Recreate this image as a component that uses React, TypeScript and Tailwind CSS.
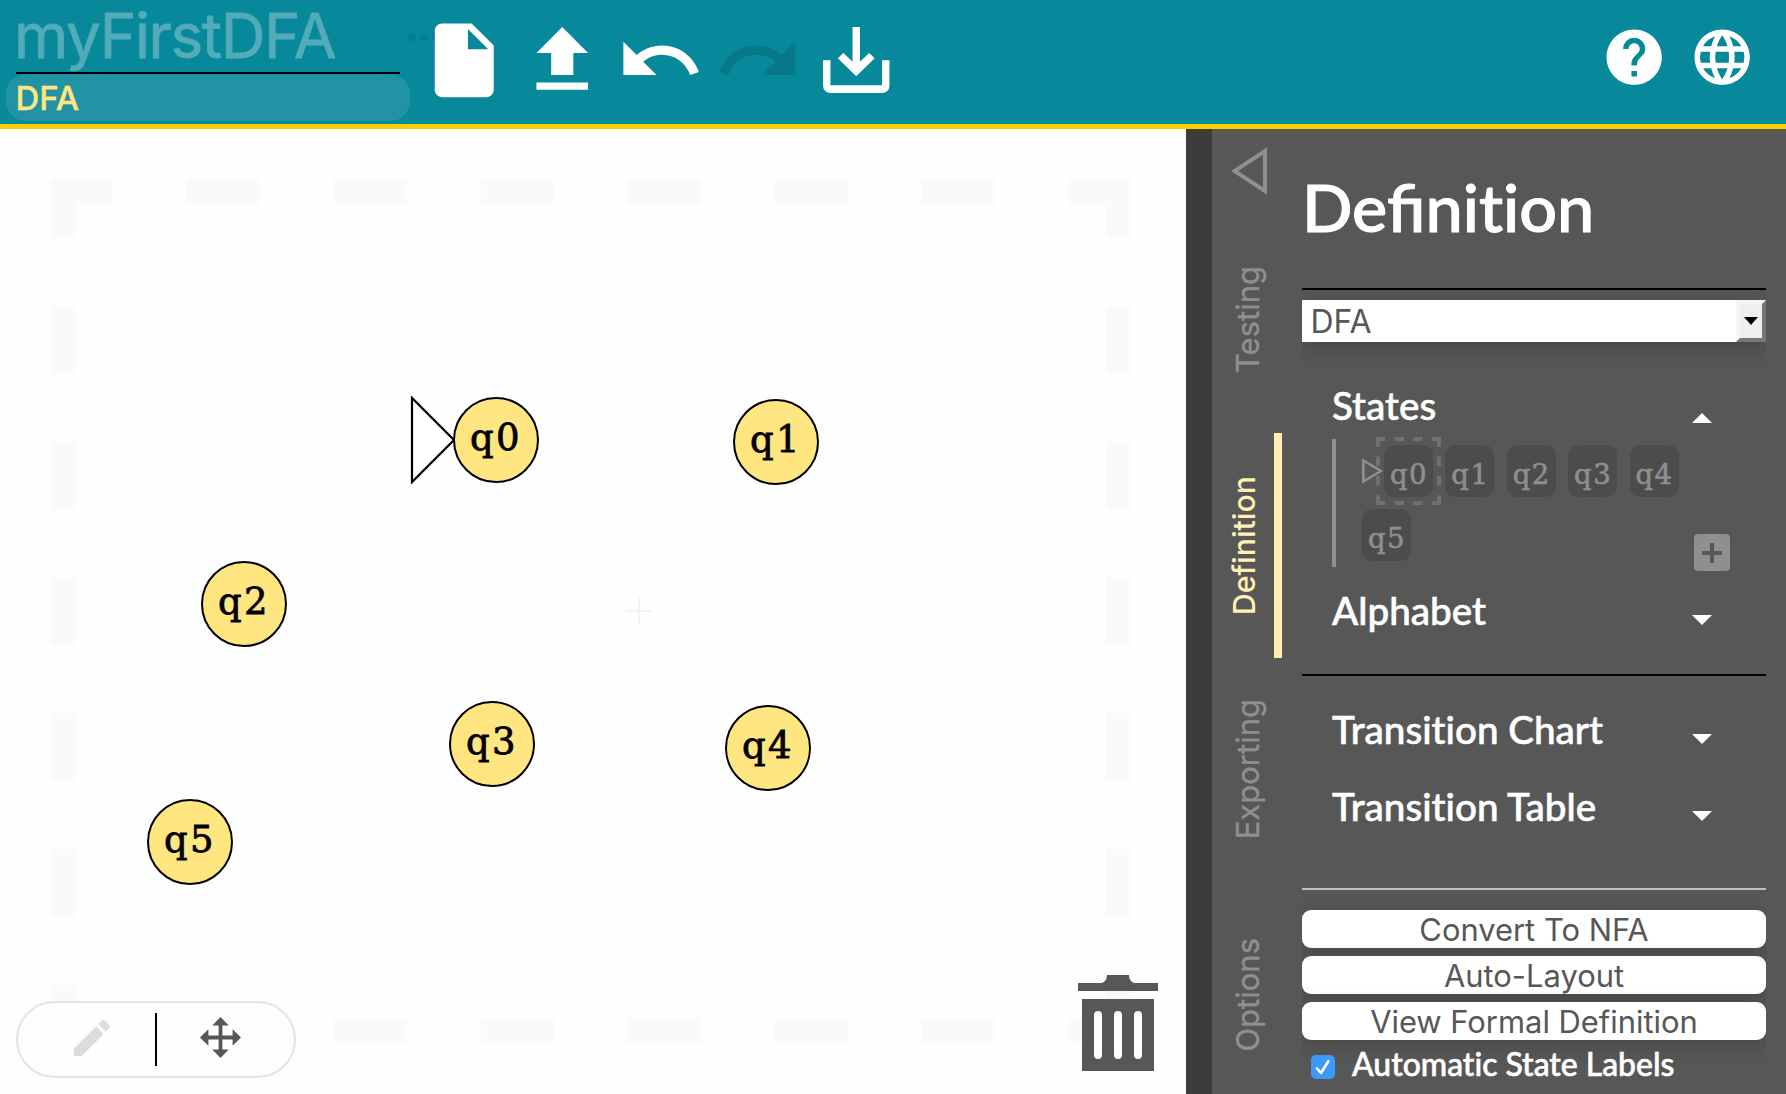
import React from 'react';

type IconProps = { d: string; className?: string };

function Icon({ d, className = '' }: IconProps) {
  return (
    <svg viewBox="0 0 24 24" fill="currentColor" className={`shrink-0 ${className}`}>
      <path d={d} />
    </svg>
  );
}

const ICONS = {
  file: 'M6 2c-1.1 0-1.99.9-1.99 2L4 20c0 1.1.89 2 1.99 2H18c1.1 0 2-.9 2-2V8l-6-6H6zm7 7V3.5L18.5 9H13z',
  upload: 'M9 16h6v-6h4l-7-7-7 7h4zm-4 2h14v2H5z',
  undo: 'M12.5 8c-2.65 0-5.05.99-6.9 2.6L2 7v9h9l-3.62-3.62c1.39-1.16 3.16-1.88 5.12-1.88 3.54 0 6.55 2.31 7.6 5.5l2.37-.78C21.08 11.03 17.15 8 12.5 8z',
  redo: 'M18.4 10.6C16.55 8.99 14.15 8 11.5 8c-4.65 0-8.58 3.03-9.96 7.22L3.9 16c1.05-3.19 4.05-5.5 7.6-5.5 1.95 0 3.73.72 5.12 1.88L13 16h9V7l-3.6 3.6z',
  save: 'M11 3v9.4L8.5 10 7 11.45l5 4.9 5-4.9L15.5 10 13 12.4V3zM3 12v6.9a2 2 0 0 0 2 2h14a2 2 0 0 0 2-2V12h-2v6.8H5V12z',
  help: 'M12 2C6.48 2 2 6.48 2 12s4.48 10 10 10 10-4.48 10-10S17.52 2 12 2zm1 17h-2v-2h2v2zm2.07-7.75l-.9.92C13.45 12.9 13 13.5 13 15h-2v-.5c0-1.1.45-2.1 1.17-2.83l1.24-1.26c.37-.36.59-.86.59-1.41 0-1.1-.9-2-2-2s-2 .9-2 2H8c0-2.21 1.79-4 4-4s4 1.79 4 4c0 .88-.36 1.68-.93 2.25z',
  globe:
    'M11.99 2C6.47 2 2 6.48 2 12s4.47 10 9.99 10C17.52 22 22 17.52 22 12S17.52 2 11.99 2zm6.93 6h-2.95c-.32-1.25-.78-2.45-1.38-3.56 1.84.63 3.37 1.91 4.33 3.56zM12 4.04c.83 1.2 1.48 2.53 1.91 3.96h-3.82c.43-1.43 1.08-2.76 1.91-3.96zM4.26 14C4.1 13.36 4 12.69 4 12s.1-1.36.26-2h3.38c-.08.66-.14 1.32-.14 2 0 .68.06 1.34.14 2H4.26zm.82 2h2.95c.32 1.25.78 2.45 1.38 3.56-1.84-.63-3.37-1.9-4.33-3.56zm2.95-8H5.08c.96-1.66 2.49-2.93 4.33-3.56C8.81 5.55 8.35 6.75 8.03 8zM12 19.96c-.83-1.2-1.48-2.53-1.91-3.96h3.82c-.43 1.43-1.08 2.76-1.91 3.96zM14.34 14H9.66c-.09-.66-.16-1.32-.16-2 0-.68.07-1.35.16-2h4.68c.09.65.16 1.32.16 2 0 .68-.07 1.34-.16 2zm.25 5.56c.6-1.11 1.06-2.31 1.38-3.56h2.95c-.96 1.65-2.49 2.93-4.33 3.56zM16.36 14c.08-.66.14-1.32.14-2 0-.68-.06-1.34-.14-2h3.38c.16.64.26 1.31.26 2s-.1 1.36-.26 2h-3.38z',
  pencil:
    'M3 17.25V21h3.75L17.81 9.94l-3.75-3.75L3 17.25zM20.71 7.04c.39-.39.39-1.02 0-1.41l-2.34-2.34c-.39-.39-1.02-.39-1.41 0l-1.83 1.83 3.75 3.75 1.83-1.83z',
};

function Header() {
  return (
    <header className="flex h-[129px] shrink-0 border-b-[5px] border-[#ffce00] bg-[#08899b] text-white">
      <div className="w-[410px] shrink-0">
        <div className="mr-2.5 ml-4 h-[74px] border-b-2 border-black">
          <div className="-ml-0.5 text-[62px] leading-[71px] tracking-[-1.4px] text-[#52abb9] [-webkit-text-stroke:0.8px_#52abb9]">
            myFirstDFA
          </div>
        </div>
        <div className="ml-1.5 h-[47px] rounded-[20px] bg-[#2293a5] pl-[9.5px] text-[33px] leading-[48px] font-medium text-[#ffe680] [-webkit-text-stroke:0.3px_#ffe680]">
          DFA
        </div>
      </div>
      <div className="relative flex gap-[9.5px] pt-4 pl-[9.5px]">
        <div className="absolute top-[33px] left-[-2px] flex gap-1">
          <span className="size-2 rounded-full bg-[#067b8b]" />
          <span className="size-2 rounded-full bg-[#067b8b]" />
          <span className="size-2 rounded-full bg-[#067b8b]" />
        </div>
        <Icon d={ICONS.file} className="relative size-[88.5px]" />
        <Icon d={ICONS.upload} className="size-[88.5px]" />
        <Icon d={ICONS.undo} className="size-[88.5px]" />
        <Icon d={ICONS.redo} className="size-[88.5px] text-[#067887]" />
        <Icon d={ICONS.save} className="size-[88.5px]" />
      </div>
      <div className="ml-auto flex gap-[21.6px] pt-[24.3px] pr-[30.7px]">
        <Icon d={ICONS.help} className="size-[66.4px]" />
        <Icon d={ICONS.globe} className="size-[66.4px]" />
      </div>
    </header>
  );
}

const NODES = [
  { name: 'q0', x: 496, y: 311 },
  { name: 'q1', x: 776, y: 313 },
  { name: 'q2', x: 244, y: 475 },
  { name: 'q3', x: 492, y: 615 },
  { name: 'q4', x: 768, y: 619 },
  { name: 'q5', x: 190, y: 713 },
];

function Canvas() {
  return (
    <main className="relative w-[1186px] shrink-0 bg-[#fefefe]">
      <svg width="1186" height="965" viewBox="0 0 1186 965" className="absolute inset-0" fill="none">
        <g stroke="#fafafa" strokeWidth="25">
          <path d="M51 62.5H1131M51 901.5H1131" strokeDasharray="73.3 73.75" strokeDashoffset="11.7" />
          <path d="M63.5 75V889M1118.5 75V889" strokeDasharray="67.7 68" strokeDashoffset="33.7" />
        </g>
        <path d="M626 482h26M639 469v26" stroke="#f3f3f3" strokeWidth="2" />
        <path d="M412 269V353L454 311z" fill="#fff" stroke="#000" strokeWidth="2.2" />
      </svg>
      {NODES.map((n) => (
        <div
          key={n.name}
          style={{ left: n.x - 43, top: n.y - 43 }}
          className="absolute size-[86px] rounded-full border-[2.4px] border-black bg-[#ffe680] text-center font-['DejaVu_Serif',serif] text-[37px] leading-[77px] tracking-[2.5px] text-black [-webkit-text-stroke:0.8px_#000]"
        >
          {n.name}
        </div>
      ))}
      <div className="absolute bottom-[16px] left-[16px] flex h-[77px] w-[280px] items-center rounded-full border-2 border-[#e4e4e4] bg-[#fefefe]">
        <Icon d={ICONS.pencil} className="-mt-1 ml-[50px] size-12 text-[#dcdcdc]" />
        <span className="ml-[39px] h-[53px] w-0.5 bg-black" />
        <svg viewBox="0 0 41 41" className="-mt-[5px] ml-[43px] size-[41px]" fill="#575757">
          <path d="M20.5 0l8.2 8.4h-6.3v10.2h10.2v-6.3L41 20.5l-8.4 8.2v-6.3H22.4v10.2h6.3L20.5 41l-8.2-8.4h6.3V22.4H8.4v6.3L0 20.5l8.4-8.2v6.3h10.2V8.4h-6.3z" />
        </svg>
      </div>
      <svg viewBox="0 0 80 96" className="absolute top-[846px] left-[1078px] h-[96px] w-[80px]" fill="#575757">
        <path d="M0 8h24q5-2 5-8h22q0 6 5 8h24v8H0zM4 24h72v72H4z" />
        <path d="M20 40v40M40 40v40M60 40v40" stroke="#fefefe" strokeWidth="8" strokeLinecap="round" />
      </svg>
    </main>
  );
}

const TABS = [
  { name: 'Testing', active: false },
  { name: 'Definition', active: true },
  { name: 'Exporting', active: false },
  { name: 'Options', active: false },
];

function TabStrip() {
  return (
    <nav className="flex w-[90px] shrink-0 flex-col overflow-hidden text-[31px] leading-10 text-[#8f8f8f]">
      <div className="h-[78px] shrink-0 pt-[17px] pl-[19px]">
        <svg width="37" height="50" viewBox="0 0 37 50" fill="none" stroke="#8f8f8f" strokeWidth="4">
          <path d="M34 5v40L3.5 25z" />
        </svg>
      </div>
      {TABS.map((t) =>
        t.active ? (
          <div
            key={t.name}
            className="mt-px mr-5 -mb-px flex h-[225px] shrink-0 items-center border-r-8 border-[#fff0b3] pl-3 text-[30.3px] font-medium text-[#fff0b3]"
          >
            <span className="rotate-180 [writing-mode:vertical-rl]">{t.name}</span>
          </div>
        ) : (
          <div key={t.name} className="flex h-[225px] shrink-0 items-center pl-4 [-webkit-text-stroke:0.4px_#8f8f8f]">
            <span className="rotate-180 [writing-mode:vertical-rl]">{t.name}</span>
          </div>
        ),
      )}
    </nav>
  );
}

function Section({ title, open = false }: { title: string; open?: boolean }) {
  return (
    <div className="flex h-[44px] justify-between pr-[54px] pl-[30px] text-[38.6px] leading-[44px] font-medium [font-variant-ligatures:none] [-webkit-text-stroke:0.6px_#fff]">
      <span>{title}</span>
      {open ? (
        <svg width="20" height="10" viewBox="0 0 20 10" className="mt-[30px]" fill="#fff">
          <path d="M10 0l10 10H0z" />
        </svg>
      ) : (
        <svg width="20" height="10" viewBox="0 0 20 10" className="mt-[26.6px]" fill="#fff">
          <path d="M0 0h20L10 10z" />
        </svg>
      )}
    </div>
  );
}

function Chip({ name }: { name: string }) {
  return (
    <div className="h-[52px] w-[49px] rounded-[10px] bg-[#4c4c4c] pl-px text-center font-['DejaVu_Serif',serif] text-[27.5px] leading-[58px] tracking-[1.5px] text-[#8f8f8f] [-webkit-text-stroke:0.6px_#8f8f8f]">
      {name}
    </div>
  );
}

function Panel() {
  return (
    <section className="flex w-[464px] shrink-0 flex-col overflow-hidden font-[Lato,sans-serif] text-white">
      <h1 className="h-[161px] border-b-2 border-black pt-[37px] text-[66.5px] leading-[80px] font-medium [-webkit-text-stroke:1.1px_#fff]">
        Defi<span className="[font-variant-ligatures:none]">nition</span>
      </h1>
      <div className="mt-2.5 flex h-[42px] shrink-0 justify-between bg-white pl-[8.5px] font-[Inter,sans-serif] text-[32px] leading-[43px] text-[#575757] shadow-[0_6px_20px_rgba(0,0,0,0.22)]">
        <span>DFA</span>
        <span className="flex w-[30px] items-center justify-center border-4 border-t-[#f6f6f6] border-r-[#777] border-b-[#777] border-l-[#f6f6f6] bg-[#efefef]">
          <svg width="14" height="8" viewBox="0 0 14 8" className="-mt-px" fill="#000">
            <path d="M0 0h14L7 8z" />
          </svg>
        </span>
      </div>
      <div className="mt-[41px] h-[293px] shrink-0 border-b-2 border-black">
        <Section title="States" open />
        <div className="mt-3 ml-[30px] flex h-[128px] border-l-4 border-[#8f8f8f] pt-1.5">
          <div className="ml-[26px] flex w-[324px] shrink-0 flex-wrap content-start gap-x-[12.4px] gap-y-3 pr-[50px] [&>*:nth-child(5)]:-mr-[50px]">
            <div className="flex">
              <svg width="22" height="28" viewBox="0 0 22 28" className="mt-3" fill="none" stroke="#8f8f8f" strokeWidth="2.6">
                <path d="M1.3 3.5v21L18.8 14z" />
              </svg>
              <div className="relative">
                <svg width="65" height="68" viewBox="0 0 65 68" className="absolute -top-2 -left-2" fill="none" stroke="#707070" strokeWidth="4">
                  <path d="M0 2h65M0 66h65" strokeDasharray="9.3 9.27" />
                  <path d="M2 0v68M63 0v68" strokeDasharray="9.7 9.72" />
                </svg>
                <div className="relative">
                  <Chip name="q0" />
                </div>
              </div>
            </div>
            <Chip name="q1" />
            <Chip name="q2" />
            <Chip name="q3" />
            <Chip name="q4" />
            <Chip name="q5" />
          </div>
          <div className="mt-auto -mb-1 ml-2 flex h-[37px] w-9 shrink-0 items-center justify-center rounded-[4px] bg-[#8f8f8f]">
            <svg width="20" height="20" viewBox="0 0 20 20" stroke="#575757" strokeWidth="4">
              <path d="M10 0v20M0 10h20" />
            </svg>
          </div>
        </div>
        <div className="mt-[21px]">
          <Section title="Alphabet" />
        </div>
      </div>
      <div className="flex h-[214px] shrink-0 flex-col gap-[33px] border-b-2 border-[#c0c0c0] pt-[31px]">
        <Section title="Transition Chart" />
        <Section title="Transition Table" />
      </div>
      <div className="mt-5 flex shrink-0 flex-col gap-2 font-[Inter,sans-serif] text-[30.9px] leading-[39px] text-[#575757]">
        {['Convert To NFA', 'Auto-Layout', 'View Formal Definition'].map((label) => (
          <button key={label} className="h-[38px] rounded-[9px] bg-white shadow-[0_6px_20px_rgba(0,0,0,0.18)]">
            {label}
          </button>
        ))}
      </div>
      <label className="relative mt-[3px] flex h-[42px] shrink-0 items-center pl-[9px] text-[31.9px] leading-[42px] font-medium [font-variant-ligatures:none] [-webkit-text-stroke:0.6px_#fff]">
        <span className="mt-1.5 mr-[17px] flex size-6 items-center justify-center rounded-[5px] bg-[#3b99fc]">
          <svg width="16" height="18" viewBox="0 0 16 18" fill="none" stroke="#fff" strokeWidth="2.6" strokeLinecap="round" strokeLinejoin="round">
            <path d="M2 10.5l4 4.5L13.5 3" />
          </svg>
        </span>
        Automatic State Labels
      </label>
    </section>
  );
}

export default function App() {
  return (
    <div className="flex h-[1094px] w-[1786px] flex-col overflow-hidden bg-white font-[Inter,sans-serif]">
      <Header />
      <div className="flex min-h-0 flex-1">
        <Canvas />
        <aside className="flex flex-1 overflow-hidden border-l-[26px] border-[#3c3c3c] bg-[#575757]">
          <TabStrip />
          <Panel />
        </aside>
      </div>
    </div>
  );
}
